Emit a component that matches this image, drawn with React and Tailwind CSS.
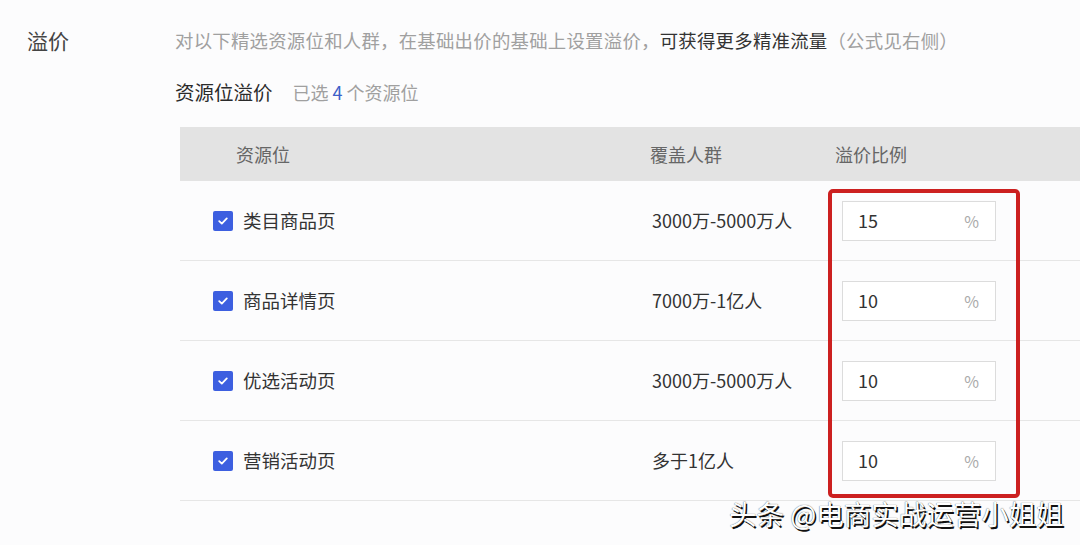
import React from "react";

const rows = [
  { name: "类目商品页", cover: "3000万-5000万人", value: "15" },
  { name: "商品详情页", cover: "7000万-1亿人", value: "10" },
  { name: "优选活动页", cover: "3000万-5000万人", value: "10" },
  { name: "营销活动页", cover: "多于1亿人", value: "10" },
];

function Check() {
  return (
    <span className="flex h-[20px] w-[20px] shrink-0 items-center justify-center rounded-[2px] bg-[#3d5fe0]">
      <svg width="12" height="12" viewBox="0 0 12 12" fill="none">
        <path d="M2.2 6.2 L4.8 8.6 L9.8 3.4" stroke="#fff" strokeWidth="1.8" strokeLinecap="round" strokeLinejoin="round" />
      </svg>
    </span>
  );
}

export default function App() {
  return (
    <div
      className="relative h-[545px] w-[1080px] overflow-hidden bg-[#fcfcfd] text-[#333]"
      style={{ fontFamily: '"Noto Sans CJK SC", "Noto Sans", sans-serif' }}
    >
      <div className="flex pt-[26px]">
        <div className="w-[175px] shrink-0 pl-[27px] text-[21px] leading-[28px] text-[#444]">溢价</div>
        <div className="flex-1">
          <div className="whitespace-nowrap text-[18.4px] leading-[28px] tracking-[0.25px] text-[#a0a0a0]">
            对以下精选资源位和人群，在基础出价的基础上设置溢价，
            <span className="text-[#333]">可获得更多精准流量</span>
            （公式见右侧）
          </div>
          <div className="mt-[24px] flex items-center leading-[28px]">
            <span className="text-[19.5px] text-[#2a2a2a]">资源位溢价</span>
            <span className="ml-[20px] text-[18px] text-[#a0a0a0]">
              已选 <span className="text-[#3d5fc8]">4</span> 个资源位
            </span>
          </div>
          <div className="ml-[5px] mt-[21px]">
            <div className="flex h-[54px] items-center bg-[#e3e3e3] text-[18px] text-[#666]">
              <div className="w-[470px] pl-[56px]">资源位</div>
              <div className="w-[185px]">覆盖人群</div>
              <div>溢价比例</div>
            </div>
            {rows.map((r) => (
              <div key={r.name} className="flex h-[80px] items-center border-b border-[#e6e6e6]">
                <div className="flex w-[470px] items-center gap-[10px] pl-[33px] text-[18.5px] text-[#333]">
                  <Check />
                  <span>{r.name}</span>
                </div>
                <div className="w-[192px] pl-[2px] text-[18px] text-[#333]">{r.cover}</div>
                <div className="flex h-[40px] w-[154px] items-center justify-between border border-[#dcdcdc] bg-white pl-[15px] pr-[16px]">
                  <span className="text-[18px] text-[#333]">{r.value}</span>
                  <span className="text-[16px] text-[#aaa]">%</span>
                </div>
              </div>
            ))}
          </div>
        </div>
      </div>

      <div className="absolute left-[828px] top-[189px] h-[309px] w-[192px] rounded-[5px] border-[4px] border-[#cc2020]" />

      <div className="absolute left-[729px] top-[496px] whitespace-nowrap text-[27.5px] leading-[34px] text-white [text-shadow:1.5px_1.5px_0_#111,0_0_1px_#333]">
        头条 @电商实战运营小姐姐
      </div>
    </div>
  );
}
